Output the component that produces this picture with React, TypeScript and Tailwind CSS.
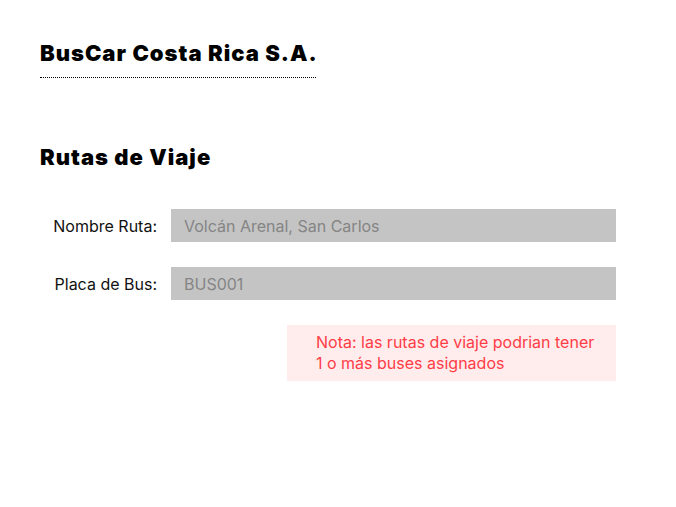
import React from 'react';

const fields = [
  { label: 'Nombre Ruta:', value: 'Volcán Arenal, San Carlos' },
  { label: 'Placa de Bus:', value: 'BUS001' },
];

const App: React.FC = () => {
  return (
    <div className="min-h-screen bg-white text-black" style={{ fontFamily: 'Inter, "Noto Sans", sans-serif' }}>
      <div className="w-[576px] ml-[40px] pt-[40px]">
        {/* Header */}
        <div className="w-[276px] pb-[10px] border-b border-dotted border-black">
          <h1 className="text-[22px] leading-[27px] font-black tracking-[1px] whitespace-nowrap">BusCar Costa Rica S.A.</h1>
        </div>

        <h2 className="mt-[66px] text-[22px] leading-[27px] font-black tracking-[1px]">Rutas de Viaje</h2>

        {/* Form */}
        <div className="mt-[38px] flex flex-col gap-[25px]">
          {fields.map((f) => (
            <div key={f.label} className="flex items-center gap-[14px]">
              <label className="w-[117px] text-right text-[16px] text-[#111]">{f.label}</label>
              <div className="flex-1 h-[33px] bg-[#c4c4c4] flex items-center pl-[13px] text-[16px] text-[#858585]">
                {f.value}
              </div>
            </div>
          ))}
        </div>

        <div className="flex justify-end mt-[25px]">
          <div className="w-[329px] h-[56px] bg-[#ffecec] pl-[29px] pt-[7px] text-[16px] leading-[21px] text-[#ff3d47]">
            Nota: las rutas de viaje podrian tener
            <br />
            1 o más buses asignados
          </div>
        </div>
      </div>
    </div>
  );
};

export default App;
